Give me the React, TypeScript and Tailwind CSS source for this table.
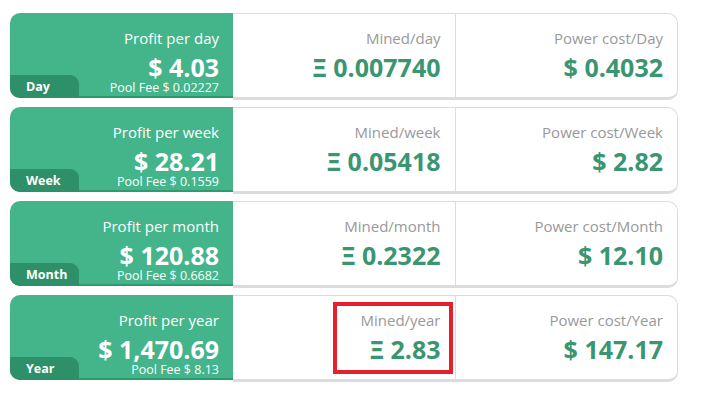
import React from 'react';

type Row = {
  tab: string;
  label: string;
  profit: string;
  fee: string;
  minedLabel: string;
  mined: string;
  powerLabel: string;
  power: string;
  mark?: boolean;
};

const rows: Row[] = [
  { tab: 'Day', label: 'Profit per day', profit: '$ 4.03', fee: 'Pool Fee $ 0.02227', minedLabel: 'Mined/day', mined: 'Ξ 0.007740', powerLabel: 'Power cost/Day', power: '$ 0.4032' },
  { tab: 'Week', label: 'Profit per week', profit: '$ 28.21', fee: 'Pool Fee $ 0.1559', minedLabel: 'Mined/week', mined: 'Ξ 0.05418', powerLabel: 'Power cost/Week', power: '$ 2.82' },
  { tab: 'Month', label: 'Profit per month', profit: '$ 120.88', fee: 'Pool Fee $ 0.6682', minedLabel: 'Mined/month', mined: 'Ξ 0.2322', powerLabel: 'Power cost/Month', power: '$ 12.10' },
  { tab: 'Year', label: 'Profit per year', profit: '$ 1,470.69', fee: 'Pool Fee $ 8.13', minedLabel: 'Mined/year', mined: 'Ξ 2.83', powerLabel: 'Power cost/Year', power: '$ 147.17', mark: true },
];

export default function App() {
  return (
    <div className="w-[711px] h-[404px] bg-white pt-[13px] pl-[10px] font-['Open_Sans',sans-serif]">
      <div className="flex flex-col gap-[7px] w-[668px]">
        {rows.map(r => (
          <div key={r.tab} className="flex items-start">
            {/* green profit panel */}
            <div className="w-[223px] h-[85px] flex items-end bg-[#44b48a] border-b-2 border-[#2f9a6e] rounded-l-[10px]">
              <div className="w-[69px] h-[23px] bg-[#2d9068] rounded-tr-[9px] rounded-bl-[10px] pl-[16px] text-[12.5px] leading-[23px] font-bold text-white shrink-0 -mb-[2px]">
                {r.tab}
              </div>
              <div className="flex-1 h-full flex flex-col items-end pr-[14px] pt-[15px] text-white">
                <span className="text-[15px] leading-[20px]">{r.label}</span>
                <span className="text-[25px] leading-[26px] font-bold mt-[6px]">{r.profit}</span>
                <span className="text-[12.5px] leading-[14px] mt-[1px]">{r.fee}</span>
              </div>
            </div>
            {/* mined + power */}
            <div className="flex-1 h-[87px] flex bg-white border border-l-0 border-b-[3px] border-[#dcdcdc] rounded-r-[10px]">
              <div className="relative flex-1 flex flex-col items-end pr-[14px] pt-[14px] border-r border-[#dcdcdc]">
                <span className="text-[15px] leading-[20px] text-[#999]">{r.minedLabel}</span>
                <span className="text-[25px] leading-[26px] font-bold text-[#3a9571] mt-[6px]">{r.mined}</span>
                {r.mark && (
                  <div className="absolute right-[2px] top-[6px] w-[120px] h-[72px] border-4 border-[#e3202b]" />
                )}
              </div>
              <div className="flex-1 flex flex-col items-end pr-[14px] pt-[14px]">
                <span className="text-[15px] leading-[20px] text-[#999]">{r.powerLabel}</span>
                <span className="text-[25px] leading-[26px] font-bold text-[#3a9571] mt-[6px]">{r.power}</span>
              </div>
            </div>
          </div>
        ))}
      </div>
    </div>
  );
}
